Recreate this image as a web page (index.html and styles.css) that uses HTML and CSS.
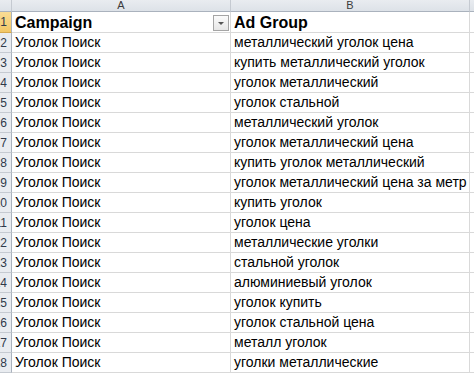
FILE: index.html
```html
<!DOCTYPE html>
<html>
<head>
    <title>Campaign sheet</title>
    <link rel="stylesheet" href="styles.css">
</head>
<body>
    <div class="sheet">
        <div class="corner"></div>
        <div class="col-head">A</div>
        <div class="col-head">B</div>
        <div class="col-head last"></div>

        <div class="row-num active"><span>1</span></div>
        <div class="cell head">Campaign<span class="filter"><i></i></span></div>
        <div class="cell head">Ad Group</div>
        <div class="cell last"></div>

        <div class="row-num"><span>2</span></div>
        <div class="cell">Уголок Поиск</div>
        <div class="cell">металлический уголок цена</div>
        <div class="cell last"></div>

        <div class="row-num"><span>3</span></div>
        <div class="cell">Уголок Поиск</div>
        <div class="cell">купить металлический уголок</div>
        <div class="cell last"></div>

        <div class="row-num"><span>4</span></div>
        <div class="cell">Уголок Поиск</div>
        <div class="cell">уголок металлический</div>
        <div class="cell last"></div>

        <div class="row-num"><span>5</span></div>
        <div class="cell">Уголок Поиск</div>
        <div class="cell">уголок стальной</div>
        <div class="cell last"></div>

        <div class="row-num"><span>6</span></div>
        <div class="cell">Уголок Поиск</div>
        <div class="cell">металлический уголок</div>
        <div class="cell last"></div>

        <div class="row-num"><span>7</span></div>
        <div class="cell">Уголок Поиск</div>
        <div class="cell">уголок металлический цена</div>
        <div class="cell last"></div>

        <div class="row-num"><span>8</span></div>
        <div class="cell">Уголок Поиск</div>
        <div class="cell">купить уголок металлический</div>
        <div class="cell last"></div>

        <div class="row-num"><span>9</span></div>
        <div class="cell">Уголок Поиск</div>
        <div class="cell">уголок металлический цена за метр</div>
        <div class="cell last"></div>

        <div class="row-num"><span>10</span></div>
        <div class="cell">Уголок Поиск</div>
        <div class="cell">купить уголок</div>
        <div class="cell last"></div>

        <div class="row-num"><span>11</span></div>
        <div class="cell">Уголок Поиск</div>
        <div class="cell">уголок цена</div>
        <div class="cell last"></div>

        <div class="row-num"><span>12</span></div>
        <div class="cell">Уголок Поиск</div>
        <div class="cell">металлические уголки</div>
        <div class="cell last"></div>

        <div class="row-num"><span>13</span></div>
        <div class="cell">Уголок Поиск</div>
        <div class="cell">стальной уголок</div>
        <div class="cell last"></div>

        <div class="row-num"><span>14</span></div>
        <div class="cell">Уголок Поиск</div>
        <div class="cell">алюминиевый уголок</div>
        <div class="cell last"></div>

        <div class="row-num"><span>15</span></div>
        <div class="cell">Уголок Поиск</div>
        <div class="cell">уголок купить</div>
        <div class="cell last"></div>

        <div class="row-num"><span>16</span></div>
        <div class="cell">Уголок Поиск</div>
        <div class="cell">уголок стальной цена</div>
        <div class="cell last"></div>

        <div class="row-num"><span>17</span></div>
        <div class="cell">Уголок Поиск</div>
        <div class="cell">металл уголок</div>
        <div class="cell last"></div>

        <div class="row-num"><span>18</span></div>
        <div class="cell">Уголок Поиск</div>
        <div class="cell">уголки металлические</div>
        <div class="cell last"></div>
    </div>
</body>
</html>
```

FILE: styles.css
```css
body {
    margin: 0;
    background: #fff;
    overflow: hidden;
    font-family: "Liberation Sans", Arial, sans-serif;
}
.sheet {
    display: grid;
    grid-template-columns: 12px 219px 239px 20px;
    grid-template-rows: 12px 21px;
    grid-auto-rows: 20px;
}
.corner,
.col-head {
    background: linear-gradient(#e9ecf0, #dde2e8);
    border-right: 1px solid #c5cad1;
    border-bottom: 1px solid #aab2bd;
    box-sizing: border-box;
}
.col-head {
    font-size: 11px;
    line-height: 10px;
    color: #3b3b3b;
    text-align: center;
    overflow: hidden;
}
.col-head.last {
    border-right: none;
}
.row-num {
    background: #e9ecf0;
    border-right: 1px solid #aab2bd;
    border-bottom: 1px solid #c5cad1;
    box-sizing: border-box;
    overflow: hidden;
    display: flex;
    justify-content: flex-end;
    align-items: center;
    font-size: 12px;
    color: #2f3a4a;
}
.row-num span {
    padding-right: 4px;
    white-space: nowrap;
}
.row-num.active {
    background: linear-gradient(#f9dc95, #f2c765);
    border-bottom-color: #d6a94e;
}
.cell {
    border-right: 1px solid #d9d9d9;
    border-bottom: 1px solid #d9d9d9;
    box-sizing: border-box;
    padding: 0 3px;
    font-size: 14px;
    line-height: 19px;
    color: #000;
    white-space: nowrap;
    overflow: hidden;
    position: relative;
}
.cell.last {
    border-right: none;
}
.cell.head {
    font-weight: bold;
    font-size: 16px;
    line-height: 21px;
}
.filter {
    position: absolute;
    right: 1px;
    top: 3px;
    width: 14px;
    height: 14px;
    border: 1px solid #a5a5a5;
    background: linear-gradient(#fbfbfb, #e6e6e6);
    display: flex;
    align-items: center;
    justify-content: center;
}
.filter i {
    width: 0;
    height: 0;
    border-left: 3px solid transparent;
    border-right: 3px solid transparent;
    border-top: 3px solid #555;
}
```
